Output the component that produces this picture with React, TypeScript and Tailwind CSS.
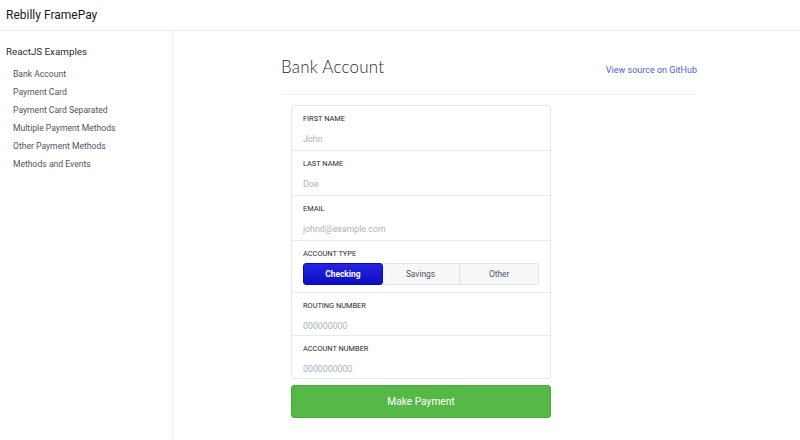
import React from "react";

const links = [
  "Bank Account",
  "Payment Card",
  "Payment Card Separated",
  "Multiple Payment Methods",
  "Other Payment Methods",
  "Methods and Events",
];

function Field({ label, value, h, last }: { label: string; value: string; h: string; last?: boolean }) {
  return (
    <div className={`px-[11px] pt-[8px] ${h} ${last ? "" : "border-b border-[#e6eaee]"}`}>
      <div className="text-[7.4px] leading-[10px] uppercase text-[#1f2937]">{label}</div>
      <div className="mt-[10px] text-[8.8px] leading-[10px] text-[#a8b3c1]">{value}</div>
    </div>
  );
}

export default function App() {
  return (
    <div className="w-[800px] h-[440px] bg-white flex flex-col overflow-hidden" style={{ fontFamily: "Roboto, 'Liberation Sans', sans-serif" }}>
      {/* header */}
      <header className="h-[31px] border-b border-[#eceff1] flex items-center px-[6px]">
        <span className="text-[12px] text-[#1a1a1a]">Rebilly FramePay</span>
      </header>

      <div className="flex flex-1">
        {/* sidebar */}
        <aside className="w-[173px] border-r border-[#eceff1] pt-[15px]">
          <div className="px-[6px] text-[9.8px] text-[#1f2d3d] leading-[12px]">ReactJS Examples</div>
          <ul className="mt-[7px] pl-[13px]">
            {links.map((l) => (
              <li key={l} className="h-[18px] leading-[18px] text-[8.6px] text-[#4a5563]">
                {l}
              </li>
            ))}
          </ul>
        </aside>

        {/* main */}
        <main className="flex-1 pl-[108px]">
          <div className="w-[416px]">
            <div className="flex items-end justify-between pt-[25px] pb-[16px] border-b border-[#eef0f2]">
              <h1 className="text-[17px] leading-[22px] font-light text-[#2a2a2a] tracking-[0.2px]" style={{ fontFamily: "Lato, 'Open Sans', sans-serif" }}>
                Bank Account
              </h1>
              <a href="#" className="text-[9px] leading-[14px] mb-[1px] text-[#4a5fd8]">View source on GitHub</a>
            </div>

            <div className="ml-[10px] w-[260px] mt-[10px]">
              <div className="border border-[#e3e7eb] rounded-[4px]">
                <Field label="First Name" value="John" h="h-[45px]" />
                <Field label="Last Name" value="Doe" h="h-[45px]" />
                <Field label="Email" value="johnd@example.com" h="h-[45px]" />
                <div className="px-[11px] pt-[8px] h-[52px] border-b border-[#e6eaee]">
                  <div className="text-[7.4px] leading-[10px] uppercase text-[#1f2937]">Account Type</div>
                  <div className="mt-[4px] flex h-[22px] rounded-[3px] border border-[#dfe3e8] bg-[#f7f8fa] text-[8.4px] text-[#4b5563]">
                    <div className="flex-1 flex items-center justify-center rounded-[3px] bg-gradient-to-b from-[#2424e0] to-[#0d0dc2] border border-[#0a0aa8] -m-px text-white font-bold">
                      Checking
                    </div>
                    <div className="flex-1 flex items-center justify-center border-r border-[#dfe3e8]">Savings</div>
                    <div className="flex-1 flex items-center justify-center">Other</div>
                  </div>
                </div>
                <Field label="Routing Number" value="000000000" h="h-[43px]" />
                <Field label="Account Number" value="0000000000" h="h-[42px]" last />
              </div>

              <button className="mt-[6px] w-full h-[33px] rounded-[3px] bg-[#56b847] border border-[#4aa83c] text-white text-[10.2px]">
                Make Payment
              </button>
            </div>
          </div>
        </main>
      </div>
    </div>
  );
}
